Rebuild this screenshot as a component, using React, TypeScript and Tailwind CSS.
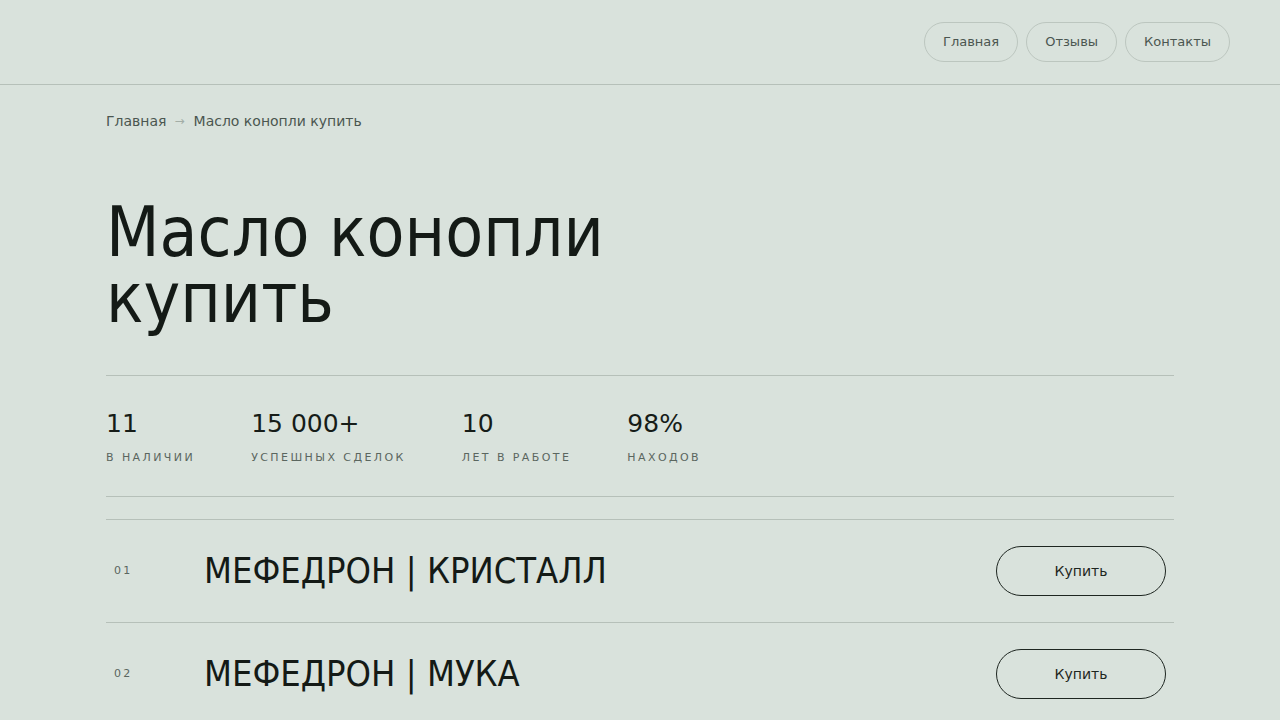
import React from 'react';

const stats = [
  { value: '11', label: 'В наличии' },
  { value: '15 000+', label: 'Успешных сделок' },
  { value: '10', label: 'Лет в работе' },
  { value: '98%', label: 'Находов' },
];

const items = [
  { num: '01', title: 'МЕФЕДРОН | КРИСТАЛЛ' },
  { num: '02', title: 'МЕФЕДРОН | МУКА' },
];

export default function App() {
  return (
    <div className="min-h-screen bg-[#d9e2dc] text-[#161c18] font-['DejaVu_Sans',sans-serif]">
      {/* Header */}
      <header className="h-[85px] border-b border-[#b6c0b9] flex items-center justify-end px-[50px]">
        <nav className="flex items-center gap-2">
          {['Главная', 'Отзывы', 'Контакты'].map((l) => (
            <a
              key={l}
              className="h-10 px-[18px] flex items-center rounded-full border border-[#bcc6bf] text-[13px] text-[#4b5650]"
            >
              {l}
            </a>
          ))}
        </nav>
      </header>

      <main className="mx-[106px] pt-[26px]">
        {/* Breadcrumbs */}
        <div className="flex items-center gap-2 text-[14px] leading-5 text-[#4b5650]">
          <span>Главная</span>
          <span className="text-[#a3ada6] text-[12px]">→</span>
          <span className="ml-px">Масло конопли купить</span>
        </div>

        <h1 className="mt-[68px] font-['DejaVu_Sans_Condensed','DejaVu_Sans',sans-serif] text-[69px] leading-[66px] font-normal text-[#141a16]">
          Масло конопли
          <br />
          купить
        </h1>

        {/* Stats */}
        <div className="mt-[44px] border-t border-b border-[#b6c0b9] flex gap-[56px] pt-[32px] pb-[30px]">
          {stats.map((s) => (
            <div key={s.label} className="flex flex-col">
              <span className="text-[25px] leading-8 text-[#161c18]">{s.value}</span>
              <span className="mt-[10px] text-[11px] leading-4 uppercase tracking-[0.22em] text-[#5b665f]">{s.label}</span>
            </div>
          ))}
        </div>

        {/* Catalog */}
        <div className="mt-[22px] border-t border-[#b6c0b9]">
          {items.map((it) => (
            <div key={it.num} className="flex items-center border-b border-[#b6c0b9] py-[26px] px-2">
              <span className="w-[90px] text-[11px] tracking-[0.2em] text-[#5b665f]">{it.num}</span>
              <span className="flex-1 font-['DejaVu_Sans_Condensed','DejaVu_Sans',sans-serif] text-[36px] leading-[50px] text-[#141a16]">
                {it.title}
              </span>
              <button className="w-[170px] h-[50px] rounded-full border border-[#1e2621] text-[14px] text-[#1e2621]">
                Купить
              </button>
            </div>
          ))}
        </div>
      </main>
    </div>
  );
}
